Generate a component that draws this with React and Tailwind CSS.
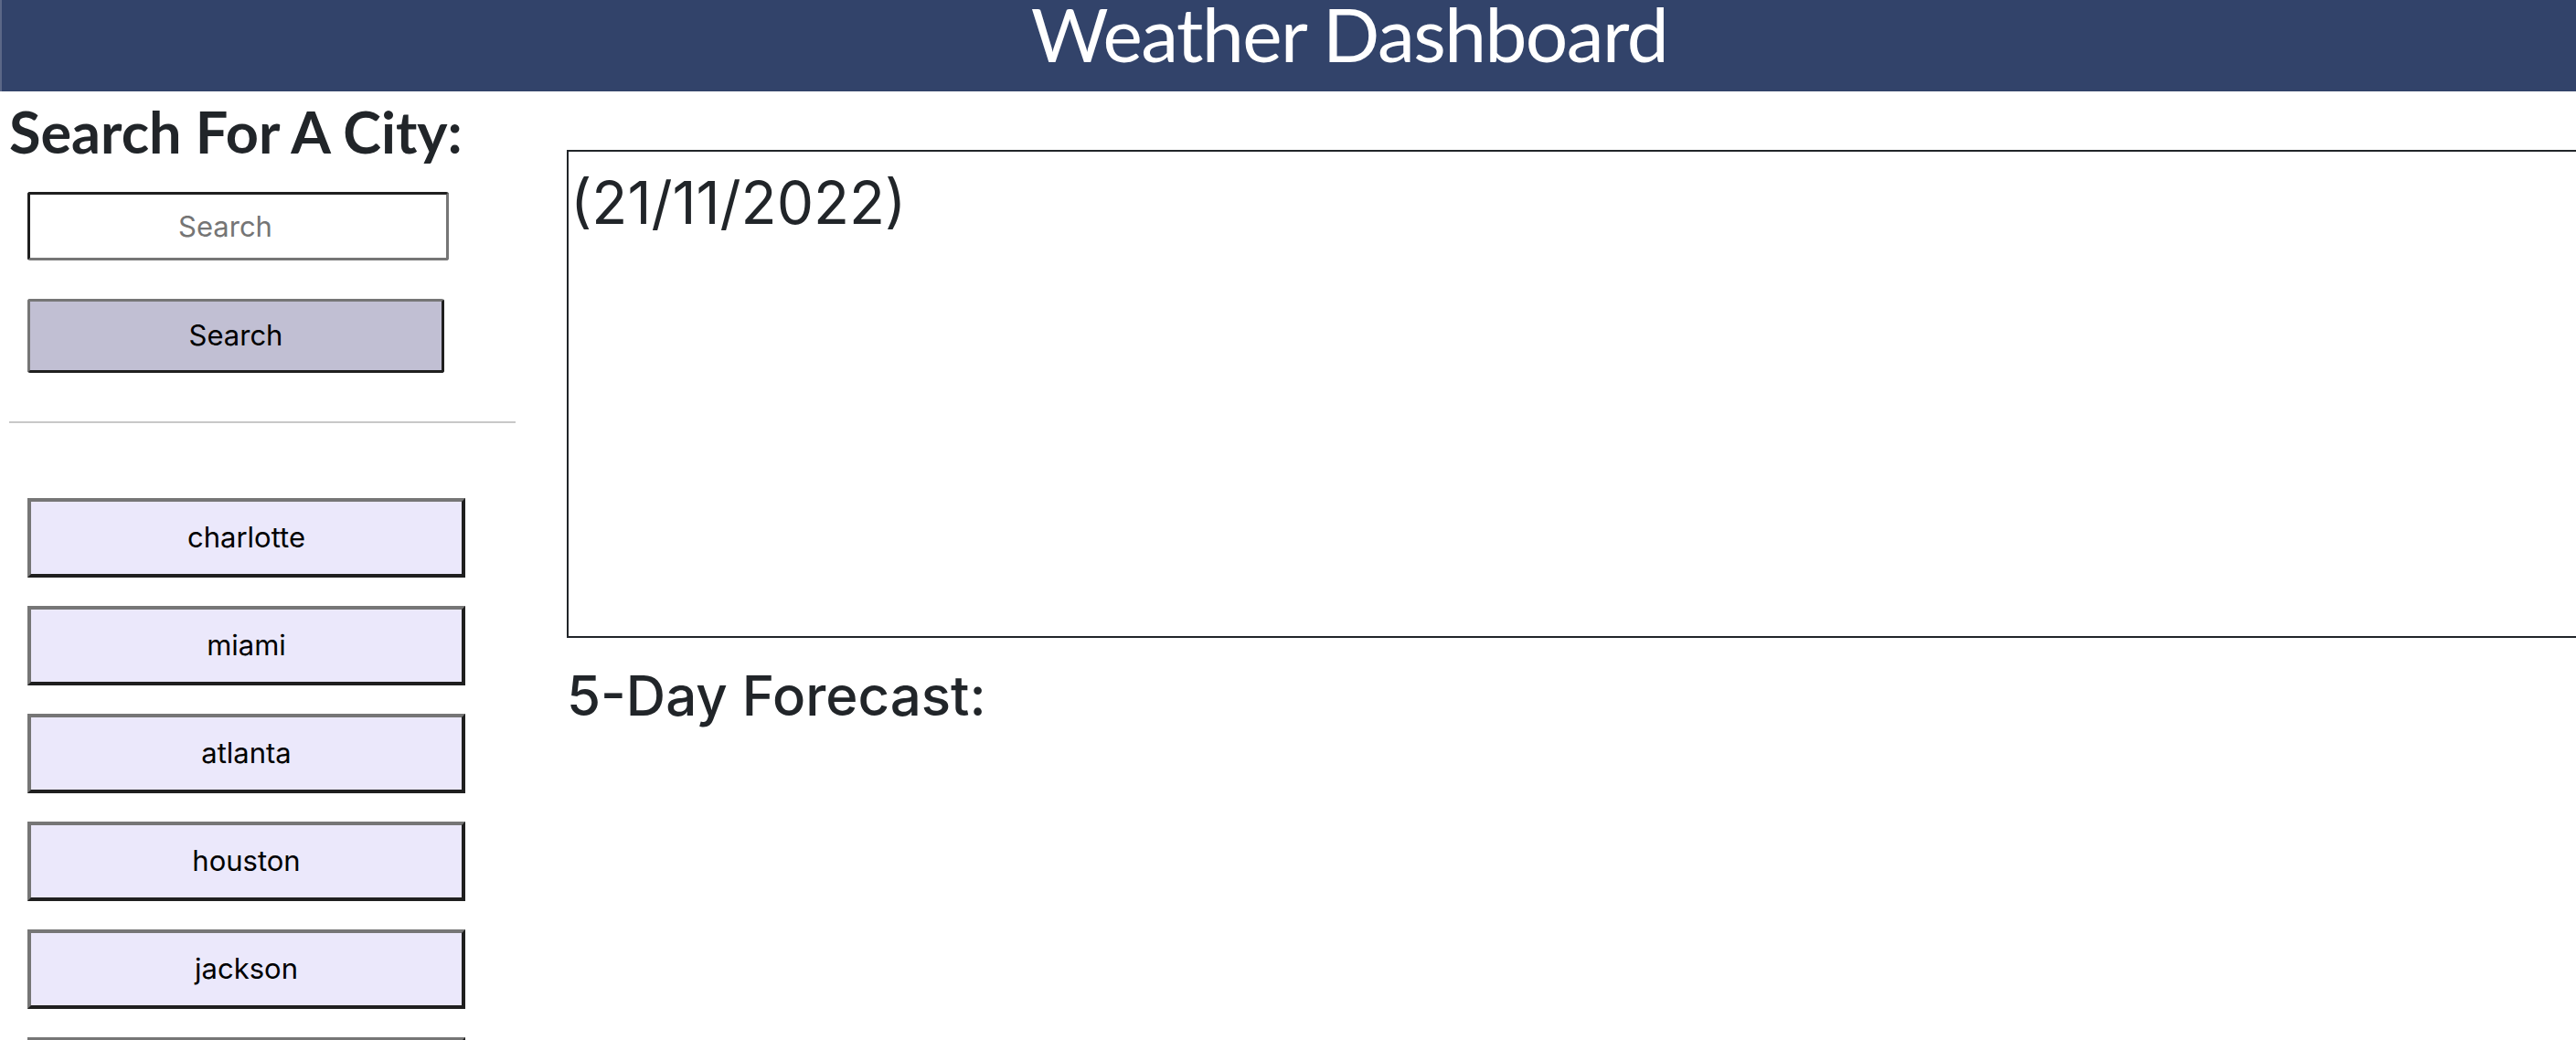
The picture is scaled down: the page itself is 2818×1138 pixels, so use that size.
import React from "react";

const cities = ["charlotte", "miami", "atlanta", "houston", "jackson", "denver"];

export default function App() {
  return (
    <div className="w-[2818px] h-[1138px] overflow-hidden bg-white">
      <header className="h-[100px] bg-[#32436a] border-l-2 border-[#5b6787] flex justify-center pl-[132px]">
        <h1 className="text-white text-[82px] leading-[72px] tracking-[-1.5px] font-normal font-['Lato',sans-serif]">
          Weather Dashboard
        </h1>
      </header>
      <div className="flex items-start">
        <aside className="w-[574px] shrink-0 px-[10px] flex flex-col">
          <h2 className="mt-[12px] text-[63px] leading-none font-bold text-[#212529] font-['Lato',sans-serif]">
            Search For A City:
          </h2>
          <input
            type="text"
            placeholder="Search"
            className="mt-[35px] ml-[20px] w-[461px] h-[75px] bg-white border-[3px] border-t-[#1f1f1f] border-l-[#1f1f1f] border-b-[#767676] border-r-[#767676] rounded-[3px] pl-[2px] pr-[30px] text-center text-[31px] text-black placeholder:text-[#757575] font-['Inter',sans-serif] outline-none"
          />
          <button className="mt-[42px] ml-[20px] w-[456px] h-[81px] bg-[#c1bfd3] border-[3px] border-t-[#767676] border-l-[#767676] border-b-[#1f1f1f] border-r-[#1f1f1f] rounded-[3px] text-[31px] text-black font-['Inter',sans-serif]">
            Search
          </button>
          <hr className="mt-[53px] border-0 border-t-2 border-[#c8c8c8]" />
          <div className="mt-[82px] ml-[20px] flex flex-col gap-[31px]">
            {cities.map((c) => (
              <button
                key={c}
                className="w-[479px] h-[87px] bg-[#ebe8fb] border-[4px] border-t-[#767676] border-l-[#767676] border-b-[#1f1f1f] border-r-[#1f1f1f] text-[31px] text-black font-['Inter',sans-serif]"
              >
                {c}
              </button>
            ))}
          </div>
        </aside>
        <main className="ml-[46px] flex-1 min-w-0 font-['Inter',sans-serif] text-[#212529]">
          <section className="mt-[64px] w-[2400px] h-[534px] border-2 border-[#212529] pl-[2px] pt-[24px]">
            <h2 className="text-[64px] leading-none font-normal">(21/11/2022)</h2>
          </section>
          <h2 className="mt-[33px] text-[60px] leading-none font-medium">5-Day Forecast:</h2>
        </main>
      </div>
    </div>
  );
}
